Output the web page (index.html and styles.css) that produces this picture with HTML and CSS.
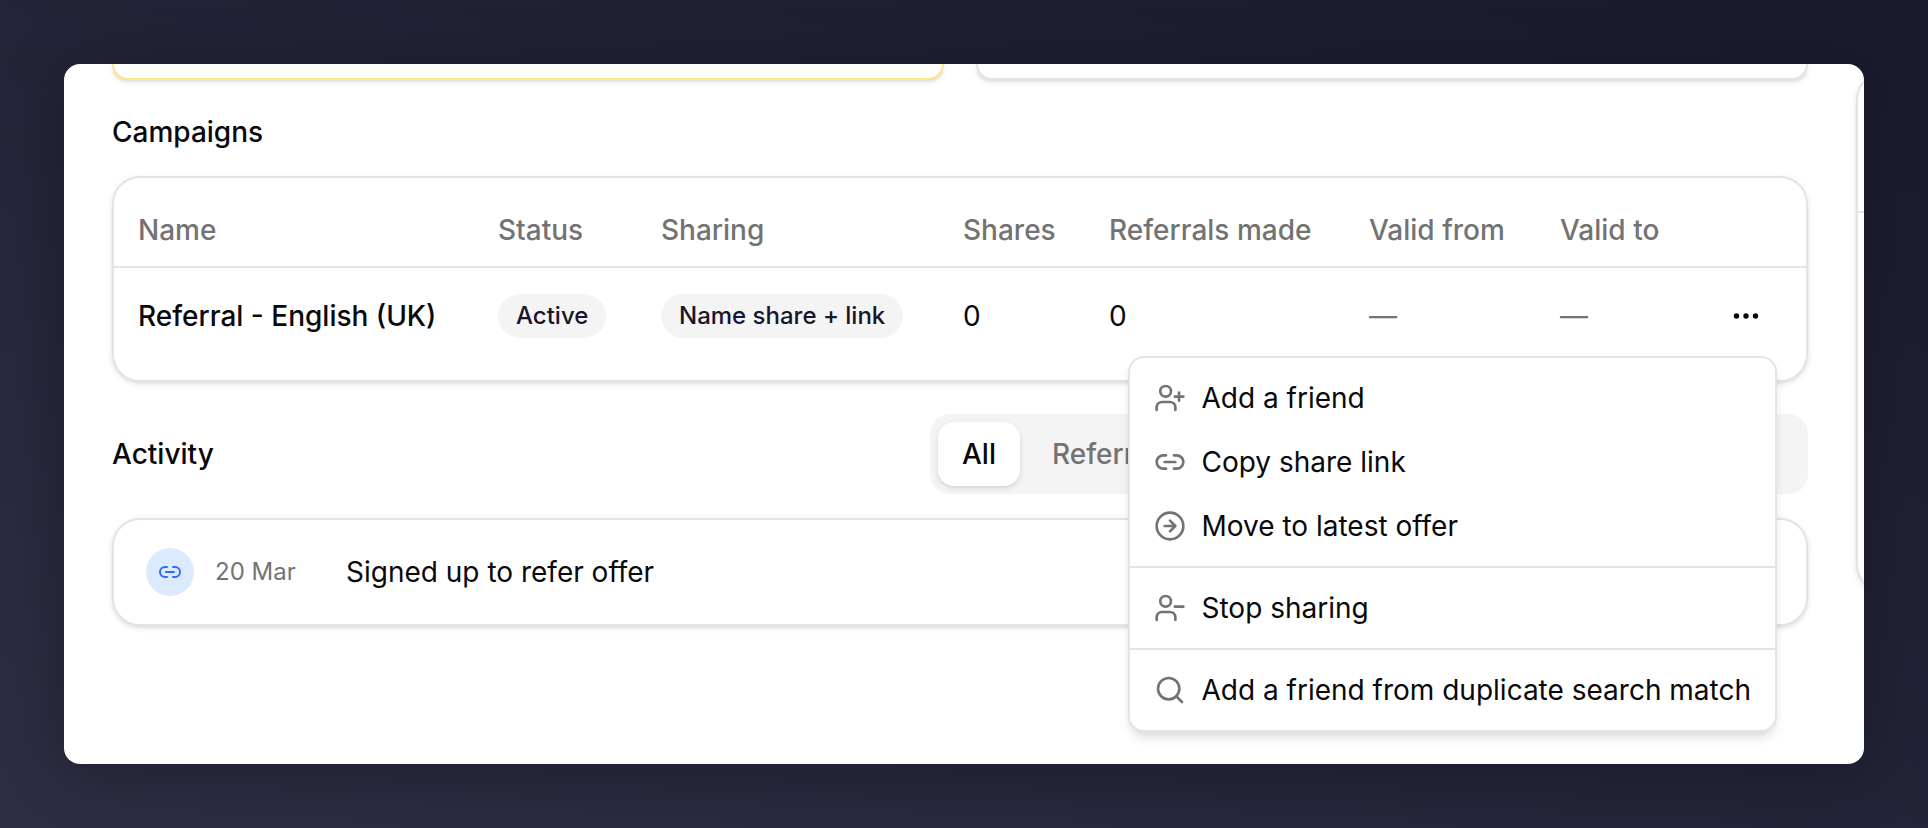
FILE: index.html
```html
<!DOCTYPE html>
<html lang="en">
<head>
    <meta charset="UTF-8">
    <meta name="viewport" content="width=device-width, initial-scale=1.0">
    <title>Campaigns</title>
    <link rel="stylesheet" href="styles.css">
</head>
<body>
    <div class="window">
        <main class="main">
            <div class="summary">
                <div class="summary_card highlight"></div>
                <div class="summary_card"></div>
            </div>

            <h2 class="campaigns_title">Campaigns</h2>
            <section class="card campaigns">
                <table>
                    <colgroup>
                        <col class="col_name">
                        <col class="col_status">
                        <col class="col_sharing">
                        <col class="col_shares">
                        <col class="col_referrals">
                        <col class="col_from">
                        <col>
                        <col class="col_actions">
                    </colgroup>
                    <thead>
                        <tr>
                            <th>Name</th>
                            <th>Status</th>
                            <th>Sharing</th>
                            <th>Shares</th>
                            <th>Referrals made</th>
                            <th>Valid from</th>
                            <th>Valid to</th>
                            <th></th>
                        </tr>
                    </thead>
                    <tbody>
                        <tr>
                            <td class="name">Referral - English (UK)</td>
                            <td><span class="badge">Active</span></td>
                            <td><span class="badge">Name share + link</span></td>
                            <td>0</td>
                            <td>0</td>
                            <td class="empty">—</td>
                            <td class="empty">—</td>
                            <td class="actions">
                                <button class="more" aria-label="Actions">
                                    <svg viewBox="0 0 32 32" fill="currentColor">
                                        <circle cx="6.5" cy="16" r="2.7"/>
                                        <circle cx="16" cy="16" r="2.7"/>
                                        <circle cx="25.5" cy="16" r="2.7"/>
                                    </svg>
                                </button>
                            </td>
                        </tr>
                    </tbody>
                </table>

                <div class="menu" role="menu">
                    <button role="menuitem">
                        <svg class="icon" viewBox="0 0 24 24">
                            <circle cx="8.7" cy="7" r="4"/>
                            <path d="M2 21v-2a4 4 0 0 1 4-4h6a4 4 0 0 1 4 4v2"/>
                            <path d="M18.8 8v6M22 11h-6.4"/>
                        </svg>
                        Add a friend
                    </button>
                    <button role="menuitem">
                        <svg class="icon" viewBox="0 0 24 24">
                            <path d="M9 17H7A5 5 0 0 1 7 7h2M15 7h2a5 5 0 1 1 0 10h-2M8 12h8"/>
                        </svg>
                        Copy share link
                    </button>
                    <button role="menuitem">
                        <svg class="icon" viewBox="0 0 24 24">
                            <circle cx="12" cy="12" r="10"/>
                            <path d="M8 12h8M12 16l4-4-4-4"/>
                        </svg>
                        Move to latest offer
                    </button>
                    <hr>
                    <button role="menuitem">
                        <svg class="icon" viewBox="0 0 24 24">
                            <circle cx="8.7" cy="7" r="4"/>
                            <path d="M2 21v-2a4 4 0 0 1 4-4h6a4 4 0 0 1 4 4v2"/>
                            <path d="M22 11h-6.4"/>
                        </svg>
                        Stop sharing
                    </button>
                    <hr>
                    <button role="menuitem">
                        <svg class="icon" viewBox="0 0 24 24">
                            <circle cx="11" cy="11" r="8"/>
                            <path d="M21 21l-4.3-4.3"/>
                        </svg>
                        Add a friend from duplicate search match
                    </button>
                </div>
            </section>

            <div class="activity_header">
                <h2>Activity</h2>
                <div class="tabs">
                    <button class="active">All</button>
                    <button>Referrals</button>
                </div>
            </div>
            <section class="card activity">
                <span class="activity_icon">
                    <svg class="icon" viewBox="0 0 24 24">
                        <path d="M9 17H7A5 5 0 0 1 7 7h2M15 7h2a5 5 0 1 1 0 10h-2M8 12h8"/>
                    </svg>
                </span>
                <time>20 Mar</time>
                <span>Signed up to refer offer</span>
            </section>
        </main>
        <aside class="side">
            <div class="side_head"></div>
        </aside>
    </div>
</body>
</html>
```
FILE: styles.css
```css
*{
    box-sizing: border-box;
}
body{
    margin: 0;
    min-height: 100vh;
    padding: 64px;
    display: flex;
    background: linear-gradient(to bottom left, #1a1a2e, #2d2d44);
    font-family: Inter, "Liberation Sans", sans-serif;
    font-size: 28px;
    line-height: 40px;
    color: #09090b;
}
h2{
    margin: 0;
    font-size: 28px;
    font-weight: 500;
}
button{
    border: none;
    padding: 0;
    background: none;
    font: inherit;
    color: inherit;
    cursor: pointer;
}
.window{
    flex: 1;
    display: flex;
    gap: 48px;
    padding-left: 48px;
    overflow: hidden;
    background-color: #fff;
    border-radius: 16px;
    box-shadow: 0 8px 64px rgba(0, 0, 0, .25);
}
.main{
    flex: 1;
    min-width: 0;
}

/* cards */
.card,
.summary_card,
.side{
    border: 2px solid #e4e4e4;
    background-color: #fff;
    box-shadow: 0 2px 6px rgba(0, 0, 0, .1), 0 2px 4px -2px rgba(0, 0, 0, .1);
}
.card{
    border-radius: 28px;
}
.summary{
    display: grid;
    grid-template-columns: 1fr 1fr;
    gap: 32px;
}
.summary_card{
    height: 16px;
    border-top: none;
    border-radius: 0 0 20px 20px;
}
.summary_card.highlight{
    border-color: #fee685;
}

/* campaigns */
.campaigns_title{
    margin: 32px 0 24px;
}
.campaigns{
    position: relative;
    padding: 16px 0;
}
table{
    width: 100%;
    table-layout: fixed;
    border-collapse: separate;
    border-spacing: 0;
}
.col_name{
    width: 360px;
}
.col_status{
    width: 163px;
}
.col_sharing{
    width: 302px;
}
.col_shares{
    width: 146px;
}
.col_referrals{
    width: 260px;
}
.col_from{
    width: 191px;
}
.col_actions{
    width: 120px;
}
th,
td{
    padding: 0 24px;
    text-align: left;
    white-space: nowrap;
}
th{
    height: 74px;
    border-bottom: 2px solid #e4e4e4;
    font-weight: 500;
    color: #737373;
}
td{
    height: 96px;
}
.name{
    font-weight: 500;
}
.empty{
    color: #737373;
}
.badge{
    display: inline-block;
    padding: 2px 18px;
    border-radius: 22px;
    background-color: #f4f4f4;
    color: #18162b;
    font-size: 24px;
    font-weight: 500;
    vertical-align: middle;
}
.actions{
    padding-right: 44px;
}
.more{
    display: block;
    margin-left: auto;
}
.more svg{
    display: block;
    width: 32px;
    height: 32px;
}
.icon{
    width: 32px;
    height: 32px;
    fill: none;
    stroke: currentColor;
    stroke-width: 2;
    stroke-linecap: round;
    stroke-linejoin: round;
}

/* row menu */
.menu{
    position: absolute;
    top: 178px;
    right: 29px;
    z-index: 1;
    padding: 8px 0;
    border: 2px solid #e4e4e4;
    border-radius: 16px;
    background-color: #fff;
    box-shadow: 0 8px 12px -2px rgba(0, 0, 0, .1), 0 4px 8px -4px rgba(0, 0, 0, .1);
}
.menu button{
    display: flex;
    align-items: center;
    gap: 16px;
    width: 100%;
    height: 64px;
    padding: 0 24px;
    white-space: nowrap;
}
.menu .icon{
    color: #737373;
}
.menu hr{
    margin: 8px 0;
    border: none;
    border-top: 2px solid #e4e4e4;
}

/* activity */
.activity_header{
    display: flex;
    justify-content: space-between;
    align-items: center;
    margin: 32px 0 24px;
}
.tabs{
    display: flex;
    gap: 8px;
    width: 878px;
    padding: 8px;
    border-radius: 20px;
    background-color: #f4f4f4;
}
.tabs button{
    height: 64px;
    padding: 0 24px;
    border-radius: 16px;
    font-weight: 500;
    color: #737373;
}
.tabs .active{
    background-color: #fff;
    color: #09090b;
    box-shadow: 0 2px 6px rgba(0, 0, 0, .1), 0 2px 4px -2px rgba(0, 0, 0, .1);
}
.activity{
    display: flex;
    align-items: center;
    padding: 28px 32px;
}
.activity_icon{
    display: flex;
    align-items: center;
    justify-content: center;
    width: 48px;
    height: 48px;
    border-radius: 50%;
    background-color: #dbeafe;
    color: #2b6bff;
}
.activity_icon .icon{
    width: 24px;
    height: 24px;
}
.activity time{
    width: 131px;
    margin-left: 21px;
    font-size: 24px;
    color: #737373;
}

/* next column, runs off the edge of the window */
.side{
    flex: none;
    width: 480px;
    height: 520px;
    margin: 8px -472px 0 0;
    border-radius: 28px;
}
.side_head{
    height: 139px;
    border-bottom: 2px solid #e4e4e4;
}
```
